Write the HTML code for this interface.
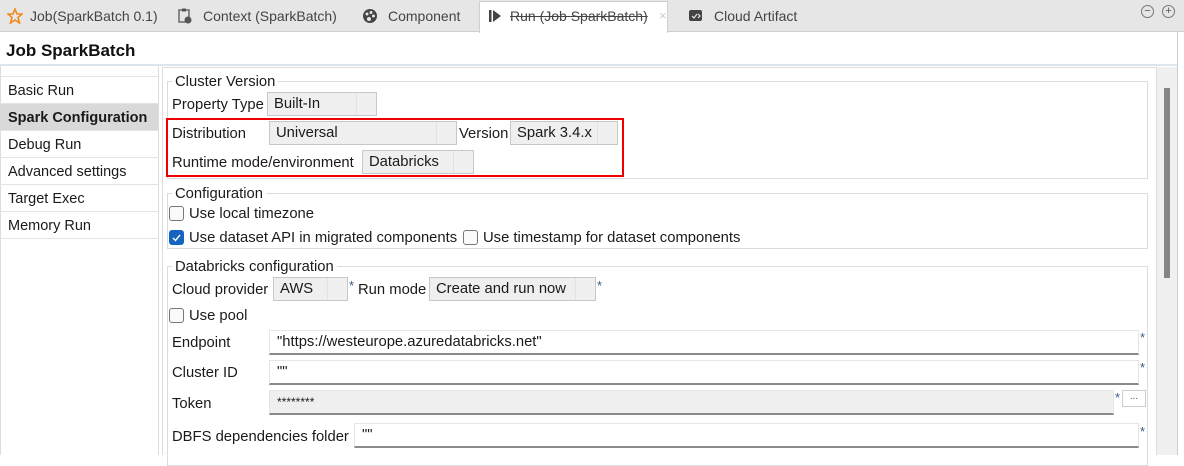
<!DOCTYPE html>
<html><head><meta charset="utf-8"><style>
*{box-sizing:border-box;margin:0;padding:0}
body{width:1184px;height:455px;overflow:hidden;background:#fff;font-family:"Liberation Sans",sans-serif;font-size:14.8px;line-height:19px;color:#1a1a1a;position:relative}
.a{position:absolute;white-space:nowrap}
.tab{position:absolute;top:0;height:32px;line-height:32px;color:#444;font-size:14px}
.combo{position:absolute;background:#efefef;border:1px solid #c8c8c8;height:24px;line-height:23px;padding-left:6px}
.combo i{position:absolute;right:0;top:0;bottom:0;width:20px;border-left:1px solid #e2e2e2;background:#f0f0f0}
.field{position:absolute;background:#fff;border:1px solid #e6e6e6;border-bottom:2px solid #8a8a8a;height:25px;line-height:23px;padding-left:7px}
.grp{position:absolute;border:1px solid #dcdcdc}
.gt{position:absolute;background:#fff;padding:0 3px;line-height:17px}
.cb{position:absolute;width:15px;height:15px;border:1px solid #777;border-radius:3px;background:#fafafa}
.star{position:absolute;color:#3a5a8a;font-size:13px}
.side{position:absolute;left:0;width:158px;height:27px;line-height:28px;padding-left:8px;border-bottom:1px solid #e4e4e4;font-size:14.5px}
</style></head><body>
<div class="a" style="left:0;top:0;width:1184px;height:32px;background:#e6e6e6;border-bottom:1px solid #cfcfcf"></div>
<div class="a" style="left:479px;top:1px;width:189px;height:32px;background:#fff;border:1px solid #cfcfcf;border-bottom:none"></div>
<div class="tab" style="left:7px"><svg width="16" height="16" style="vertical-align:-3px"><path d="M8 1 L10 6 L15 6 L11 9.5 L12.5 15 L8 12 L3.5 15 L5 9.5 L1 6 L6 6Z" fill="none" stroke="#f08a1c" stroke-width="1.6"/></svg></div>
<div class="tab" style="left:30px">Job(SparkBatch 0.1)</div>
<div class="tab" style="left:178px"><svg width="14" height="16" style="vertical-align:-3px"><rect x="1" y="2" width="10" height="12" fill="none" stroke="#555" stroke-width="1.3"/><rect x="4" y="0.5" width="4" height="3" fill="#555"/><circle cx="10" cy="12" r="3.5" fill="#555"/></svg></div>
<div class="tab" style="left:203px">Context (SparkBatch)</div>
<div class="tab" style="left:362px"><svg width="16" height="16" style="vertical-align:-3px"><circle cx="8" cy="8" r="7" fill="#444"/><circle cx="5" cy="6" r="1.5" fill="#e6e6e6"/><circle cx="9" cy="4.5" r="1.5" fill="#e6e6e6"/><circle cx="11.5" cy="8" r="1.5" fill="#e6e6e6"/><circle cx="7" cy="11" r="2" fill="#e6e6e6"/></svg></div>
<div class="tab" style="left:388px">Component</div>
<div class="tab" style="left:488px"><svg width="14" height="14" style="vertical-align:-2px"><rect x="1" y="1" width="2.5" height="12" fill="#444"/><path d="M5 1 L13 7 L5 13Z" fill="#444"/></svg></div>
<div class="tab" style="left:510px;color:#444;text-decoration:line-through">Run (Job SparkBatch)</div>
<div class="tab" style="left:659px;color:#ccc;font-size:13px">×</div>
<div class="tab" style="left:689px"><svg width="14" height="12" style="vertical-align:-1px"><rect x="0" y="0" width="13" height="11" rx="2" fill="#444"/><path d="M3 6 L5 8 L8 4 M9 4 L11 6 L9 8" stroke="#e6e6e6" stroke-width="1.2" fill="none"/></svg></div>
<div class="tab" style="left:714px">Cloud Artifact</div>
<div class="a" style="left:1141px;top:5px;width:13px;height:13px;border:1px solid #777;border-radius:50%;font-size:11px;line-height:10px;text-align:center;color:#555">−</div>
<div class="a" style="left:1162px;top:5px;width:13px;height:13px;border:1px solid #777;border-radius:50%;font-size:11px;line-height:10px;text-align:center;color:#555">+</div>
<div class="a" style="left:1177px;top:32px;width:1px;height:423px;background:#cfcfcf"></div>
<div class="a" style="left:6px;top:40px;font-weight:bold;font-size:17px;line-height:21px;color:#111">Job SparkBatch</div>
<div class="a" style="left:0;top:64px;width:1177px;height:2px;background:#dde6ef"></div>
<div class="a" style="left:0;top:66px;width:1px;height:389px;background:#ddd"></div>
<div class="a" style="left:158px;top:66px;width:1px;height:389px;background:#ddd"></div>
<div class="a" style="left:0;top:76px;width:158px;height:1px;background:#e4e4e4"></div>
<div class="side" style="top:77px">Basic Run</div>
<div class="side" style="top:104px;background:#d9d9d9;font-weight:bold">Spark Configuration</div>
<div class="side" style="top:131px">Debug Run</div>
<div class="side" style="top:158px">Advanced settings</div>
<div class="side" style="top:185px">Target Exec</div>
<div class="side" style="top:212px">Memory Run</div>
<div class="a" style="left:162px;top:67px;width:995px;height:388px;border:1px solid #ddd;border-bottom:none"></div>
<div class="a" style="left:1157px;top:67px;width:20px;height:388px;background:#f0f0f0"></div>
<div class="a" style="left:1164px;top:88px;width:6px;height:190px;background:#858585"></div>
<div class="grp" style="left:167px;top:81px;width:981px;height:98px"></div>
<div class="gt" style="left:172px;top:74px">Cluster Version</div>
<div class="a" style="left:172px;top:96px">Property Type</div>
<div class="combo" style="left:267px;top:92px;width:110px">Built-In<i></i></div>
<div class="a" style="left:166px;top:118px;width:458px;height:59px;border:2px solid #e00"></div>
<div class="a" style="left:172px;top:125px">Distribution</div>
<div class="combo" style="left:269px;top:121px;width:188px">Universal<i></i></div>
<div class="a" style="left:459px;top:125px">Version</div>
<div class="combo" style="left:510px;top:121px;width:108px">Spark 3.4.x<i></i></div>
<div class="a" style="left:172px;top:154px">Runtime mode/environment</div>
<div class="combo" style="left:362px;top:150px;width:112px">Databricks<i></i></div>
<div class="grp" style="left:167px;top:193px;width:981px;height:56px"></div>
<div class="gt" style="left:172px;top:186px">Configuration</div>
<div class="cb" style="left:169px;top:206px"></div>
<div class="a" style="left:189px;top:205px">Use local timezone</div>
<div class="cb" style="left:169px;top:230px;background:#1565c0;border-color:#1565c0"><svg width="13" height="13" style="position:absolute;left:0;top:0"><path d="M3 7 L5.5 9.5 L10 4" stroke="#fff" stroke-width="1.4" fill="none"/></svg></div>
<div class="a" style="left:189px;top:229px">Use dataset API in migrated components</div>
<div class="cb" style="left:463px;top:230px"></div>
<div class="a" style="left:483px;top:229px">Use timestamp for dataset components</div>
<div class="grp" style="left:167px;top:266px;width:981px;height:200px"></div>
<div class="gt" style="left:172px;top:259px">Databricks configuration</div>
<div class="a" style="left:172px;top:281px">Cloud provider</div>
<div class="combo" style="left:273px;top:277px;width:75px">AWS<i></i></div>
<div class="star" style="left:349px;top:276px">*</div>
<div class="a" style="left:358px;top:281px">Run mode</div>
<div class="combo" style="left:429px;top:277px;width:167px">Create and run now<i></i></div>
<div class="star" style="left:597px;top:276px">*</div>
<div class="cb" style="left:169px;top:308px"></div>
<div class="a" style="left:189px;top:307px">Use pool</div>
<div class="a" style="left:172px;top:334px">Endpoint</div>
<div class="field" style="left:269px;top:330px;width:870px">"https://westeurope.azuredatabricks.net"</div>
<div class="star" style="left:1140px;top:328px">*</div>
<div class="a" style="left:172px;top:364px">Cluster ID</div>
<div class="field" style="left:269px;top:360px;width:870px">""</div>
<div class="star" style="left:1140px;top:358px">*</div>
<div class="a" style="left:172px;top:395px">Token</div>
<div class="field" style="left:269px;top:390px;width:845px;background:#efefef;font-size:12px">********</div>
<div class="star" style="left:1115px;top:388px">*</div>
<div class="a" style="left:1122px;top:390px;width:24px;height:17px;border:1px solid #ccc;background:#fff;font-size:10px;text-align:center;line-height:11px;color:#555">...</div>
<div class="a" style="left:172px;top:428px">DBFS dependencies folder</div>
<div class="field" style="left:354px;top:423px;width:785px">""</div>
<div class="star" style="left:1140px;top:422px">*</div>
</body></html>
